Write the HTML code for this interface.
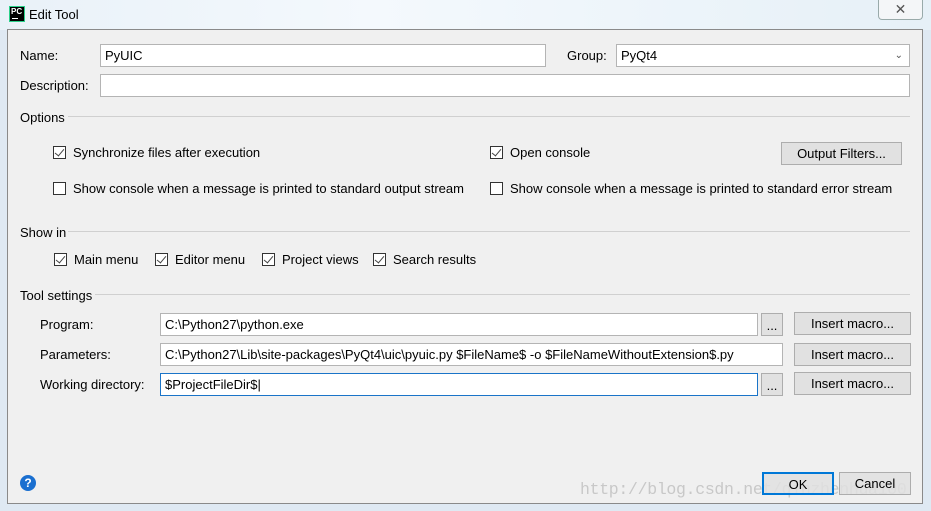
<!DOCTYPE html>
<html><head><meta charset="utf-8"><style>
*{margin:0;padding:0;box-sizing:border-box}
body{width:931px;height:511px;overflow:hidden;background:#dfe9f3;font-family:"Liberation Sans",sans-serif;font-size:13px;color:#000;position:relative}
.a{position:absolute;white-space:nowrap}
.t{line-height:16px}
.in{position:absolute;background:#fff;border:1px solid #b4b4b4;height:23px;line-height:21px;padding-left:4px}
.btn{position:absolute;background:#e1e1e1;border:1px solid #adadad;height:23px;line-height:21px;text-align:center}
.cb{position:absolute;width:13px;height:13px;border:1px solid #333;background:#fff}
.cb.c::after{content:"";position:absolute;left:3px;top:0px;width:4px;height:8px;border:solid #444;border-width:0 1px 1px 0;transform:rotate(40deg)}
.ln{position:absolute;height:1px;background:#d0d0d0}
</style></head><body>
<div class="a" style="left:0;top:0;width:931px;height:30px;background:linear-gradient(90deg,#e9f1f8,#f4f9fd 40%,#e6f0f7)"></div>
<div class="a" style="left:9px;top:6px;width:16px;height:16px;background:#000;border:1px solid #2bd08a"></div>
<div class="a" style="left:11px;top:7px;color:#fff;font-size:8px;font-weight:bold">PC</div>
<div class="a" style="left:12px;top:18px;width:6px;height:1px;background:#fff"></div>
<div class="a t" style="left:29px;top:7px">Edit Tool</div>
<div class="a" style="left:878px;top:0;width:45px;height:20px;border:1px solid #9aa;border-top:0;border-radius:0 0 4px 4px;background:#f4f6f8;text-align:center;color:#555;font-size:14px;line-height:18px">✕</div>
<div class="a" style="left:7px;top:29px;width:916px;height:475px;background:#f0f0f0;border:1px solid #8a8a8a"></div>

<div class="a t" style="left:20px;top:48px">Name:</div>
<div class="in" style="left:100px;top:44px;width:446px">PyUIC</div>
<div class="a t" style="left:567px;top:48px">Group:</div>
<div class="in" style="left:616px;top:44px;width:294px">PyQt4<span style="position:absolute;right:6px;top:0;color:#555;font-size:10px">&#8964;</span></div>
<div class="a t" style="left:20px;top:78px">Description:</div>
<div class="in" style="left:100px;top:74px;width:810px"></div>

<div class="a t" style="left:20px;top:110px">Options</div>
<div class="ln" style="left:68px;top:116px;width:842px"></div>
<div class="cb c" style="left:53px;top:146px"></div>
<div class="a t" style="left:73px;top:145px">Synchronize files after execution</div>
<div class="cb c" style="left:490px;top:146px"></div>
<div class="a t" style="left:510px;top:145px">Open console</div>
<div class="btn" style="left:781px;top:142px;width:121px">Output Filters...</div>
<div class="cb" style="left:53px;top:182px"></div>
<div class="a t" style="left:73px;top:181px">Show console when a message is printed to standard output stream</div>
<div class="cb" style="left:490px;top:182px"></div>
<div class="a t" style="left:510px;top:181px">Show console when a message is printed to standard error stream</div>

<div class="a t" style="left:20px;top:225px">Show in</div>
<div class="ln" style="left:68px;top:231px;width:842px"></div>
<div class="cb c" style="left:54px;top:253px"></div><div class="a t" style="left:74px;top:252px">Main menu</div>
<div class="cb c" style="left:155px;top:253px"></div><div class="a t" style="left:175px;top:252px">Editor menu</div>
<div class="cb c" style="left:262px;top:253px"></div><div class="a t" style="left:282px;top:252px">Project views</div>
<div class="cb c" style="left:373px;top:253px"></div><div class="a t" style="left:393px;top:252px">Search results</div>

<div class="a t" style="left:20px;top:288px">Tool settings</div>
<div class="ln" style="left:95px;top:294px;width:815px"></div>
<div class="a t" style="left:40px;top:317px">Program:</div>
<div class="in" style="left:160px;top:313px;width:598px">C:\Python27\python.exe</div>
<div class="btn" style="left:761px;top:313px;width:22px;line-height:24px">...</div>
<div class="btn" style="left:794px;top:312px;width:117px">Insert macro...</div>
<div class="a t" style="left:40px;top:347px">Parameters:</div>
<div class="in" style="left:160px;top:343px;width:623px">C:\Python27\Lib\site-packages\PyQt4\uic\pyuic.py $FileName$ -o $FileNameWithoutExtension$.py</div>
<div class="btn" style="left:794px;top:343px;width:117px">Insert macro...</div>
<div class="a t" style="left:40px;top:377px">Working directory:</div>
<div class="in" style="left:160px;top:373px;width:598px;border-color:#1a74c8">$ProjectFileDir$|</div>
<div class="btn" style="left:761px;top:373px;width:22px;line-height:24px">...</div>
<div class="btn" style="left:794px;top:372px;width:117px">Insert macro...</div>

<div class="a" style="left:20px;top:475px;width:16px;height:16px;border-radius:50%;background:#1a6fd0;color:#fff;font-weight:bold;font-size:12px;text-align:center;line-height:16px">?</div>
<div class="a" style="left:580px;top:480px;font-family:'Liberation Mono',monospace;font-size:16.5px;letter-spacing:-0.3px;color:#c8c8c8">http://blog.csdn.net/qinzhenhua100</div>
<div class="btn" style="left:762px;top:472px;width:72px;border:2px solid #0078d7;background:rgba(225,225,225,.85)">OK</div>
<div class="btn" style="left:839px;top:472px;width:72px;background:rgba(225,225,225,.85)">Cancel</div>
</body></html>
